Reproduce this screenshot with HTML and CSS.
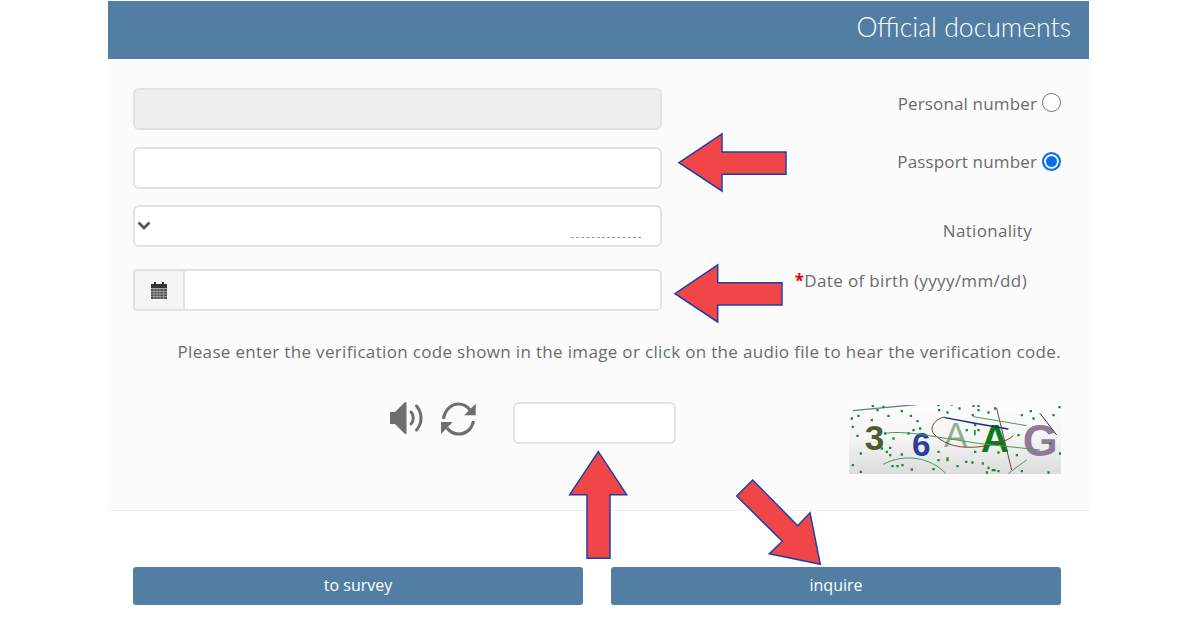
FILE: index.html
```html
<!DOCTYPE html>
<html lang="en">
<head>
<meta charset="utf-8">
<title>Official documents</title>
<link rel="stylesheet" href="styles.css">
</head>
<body>
<div class="page">
  <main class="card">
    <header class="card-head"><h1>Official documents</h1></header>
    <section class="card-body">
      <div class="row row-1">
        <input class="field field-disabled" type="text" disabled>
        <label class="side side-up"><span>Personal number</span><input class="radio" type="radio" name="idtype"></label>
      </div>
      <div class="row row-2">
        <input class="field" type="text">
        <label class="side side-up side-pass"><span>Passport number</span><input class="radio" type="radio" name="idtype" checked></label>
      </div>
      <div class="row row-3">
        <div class="field select">
          <svg class="chevron" viewBox="0 0 14 9" aria-hidden="true"><path d="M1.5 1.5 7 7l5.5-5.5"/></svg>
          <span class="dots"></span>
        </div>
        <div class="side side-nat">Nationality</div>
      </div>
      <div class="row row-4">
        <div class="date-group">
          <span class="addon">
            <svg class="calendar" viewBox="0 0 16 17" aria-hidden="true">
              <path class="cal-top" d="M0 2h3V0h2v2h6V0h2v2h3v4H0z"/>
              <path class="cal-grid" d="M0 6.500h16v10.500H0z"/>
              <path class="cal-lines" d="M3 7v10M6 7v10M9 7v10M12.500 7v10M0 9.500h16M0 12h16M0 14.500h16"/>
            </svg>
          </span>
          <input class="date-input" type="text">
        </div>
        <div class="side side-dob"><span class="req">*</span>Date of birth (yyyy/mm/dd)</div>
      </div>
      <p class="hint">Please enter the verification code shown in the image or click on the audio file to hear the verification code.</p>
      <div class="verify">
        <svg class="speaker" viewBox="0 0 35 34" aria-hidden="true">
          <path class="icon-fill" d="M1 11h5L16 1c1 0 1.500.5 1.500 1.500v29c0 1-.5 1.500-1.500 1.500L6 23H1z"/>
          <path class="icon-wave" d="M22 11c3 3 3 9 0 12M27.500 5c6 7 6 17 0 24"/>
        </svg>
        <svg class="refresh" viewBox="0 0 35 34" aria-hidden="true">
          <path class="icon-arc" d="M2.500 17C3.500 9 9.500 2 17.500 2 22 2 26 4 29 8M32.500 19C31 27 25 32 17.500 32 13 32 9 30 6 26"/>
          <path class="icon-fill" d="M34.700 1.700V13.300H23zM0 20H11.700L0 32z"/>
        </svg>
        <input class="field code" type="text">
        <svg class="captcha" viewBox="27 30 636 207" role="img" aria-label="verification code image">
          <defs><linearGradient id="cg" x1="0" y1="0" x2="0" y2="1"><stop offset="0" stop-color="#fcfcfc"/><stop offset=".5" stop-color="#f4f4f4"/><stop offset="1" stop-color="#dcdcdc"/></linearGradient></defs>
          <rect x="27" y="30" width="636" height="207" fill="url(#cg)"/>
          <text class="c-3" x="74" y="165">3</text>
          <text class="c-6" x="216" y="184">6</text>
          <text class="c-a1" x="312" y="156">A</text>
          <text class="c-a2" x="422" y="172">A</text>
          <text class="c-g" x="548" y="184">G</text>
          <path class="l-grey" d="M38 47 268 25"/>
          <path class="l-brown" d="M315 66C280 72 262 105 290 125 320 150 360 162 420 155 460 150 500 140 520 122"/>
          <path class="l-navy" d="M315 68 400 84 505 102"/>
          <path class="l-brown" d="M470 40 515 225"/>
          <path class="l-green" d="M135 115C190 105 280 125 350 135 430 150 520 155 600 165"/>
          <path class="l-green" d="M130 208C190 175 270 185 318 236"/>
          <path class="l-green" d="M505 236C525 220 545 205 560 195"/>
          <path class="l-green" d="M400 65 560 92"/>
          <path class="l-black" d="M600 55 650 120"/>
          <path class="dots-g" d="M32 67h7v7h-7zM52 59h7v7h-7zM92 72h7v7h-7zM95 29h7v7h-7zM109 42h7v7h-7zM127 32h7v7h-7zM142 59h7v7h-7zM182 45h7v7h-7zM209 59h7v7h-7zM229 75h7v7h-7zM292 27h7v7h-7zM294 42h7v7h-7zM332 25h7v7h-7zM355 37h7v7h-7zM319 49h7v7h-7zM397 29h7v7h-7zM412 29h7v7h-7zM412 42h7v7h-7zM442 49h7v7h-7zM462 37h7v7h-7zM395 57h7v7h-7zM542 57h7v7h-7zM569 45h7v7h-7zM577 67h7v7h-7zM637 57h7v7h-7zM655 33h7v7h-7zM35 92h7v7h-7zM49 119h7v7h-7zM132 112h7v7h-7zM157 127h7v7h-7zM122 157h7v7h-7zM147 155h7v7h-7zM137 167h7v7h-7zM147 177h7v7h-7zM59 172h7v7h-7zM182 175h7v7h-7zM292 167h7v7h-7zM319 187h7v12h-7zM402 167h7v7h-7zM377 102h7v7h-7zM402 105h5v16h-5zM402 87h7v7h-7zM412 102h7v7h-7zM532 117h7v7h-7zM472 169h7v7h-7zM527 177h7v7h-7zM627 142h7v7h-7zM657 172h7v7h-7zM35 207h7v7h-7zM59 227h7v7h-7zM154 210h7v7h-7zM169 210h7v7h-7zM184 207h7v7h-7zM212 220h7v7h-7zM292 192h7v7h-7zM277 219h7v7h-7zM349 210h7v7h-7zM375 197h7v7h-7zM394 199h7v7h-7zM425 202h7v7h-7zM442 215h7v7h-7zM455 222h12v7h-12zM437 229h7v7h-7zM472 225h7v7h-7zM542 225h7v7h-7zM622 229h7v7h-7zM237 97h7v7h-7zM217 102h7v7h-7zM202 112h7v7h-7z"/>
        </svg>
      </div>
    </section>
    <footer class="card-foot">
      <button class="btn btn-survey" type="button">to survey</button>
      <button class="btn btn-inquire" type="button">inquire</button>
    </footer>
  </main>
  <svg class="arrows" viewBox="0 0 1200 630" aria-hidden="true">
    <path d="M679 162.700 722 134V152H786V174.300H722V191z"/>
    <path d="M675 293.700 717.700 265V282.700H782V305H717.700V322z"/>
    <path d="M598.300 451.700 626.700 494.700H610V558.300H587V494.700H569.700z"/>
    <path d="M752.700 480 797.700 525.700 810 512.700 820.300 564.300 769.300 553.700 782.300 541.300 736.700 496z"/>
  </svg>
</div>
</body>
</html>
```
FILE: styles.css
```css
* { box-sizing: border-box; }
html, body { margin: 0; padding: 0; background: #fff; }
body { font-family: "Open Sans", "Noto Sans", "Liberation Sans", sans-serif; color: #6b6b6b; }
.page { position: relative; width: 1200px; height: 630px; overflow: hidden; padding: 1px 111px 0 108px; }
.card { display: flex; flex-direction: column; width: 981px; }
.card-head { height: 58px; background: #527ea4; display: flex; align-items: center; justify-content: flex-end; padding: 0 18px 7px 0; }
.card-head h1 { margin: 0; font-family: "Lato", sans-serif; font-weight: 300; font-size: 26.600px; color: #fff; }
.card-body { height: 452px; background: #fbfbfb; border-bottom: 1px solid #f0f0f0; padding: 29px 28px 0 25px; }
.row { display: flex; align-items: center; }
.row-1, .row-2, .row-3 { height: 42px; }
.row-2 { margin-top: 17px; }
.row-3 { margin-top: 16px; }
.row-4 { margin-top: 22px; height: 42px; }
.field { display: block; width: 529px; height: 42px; flex: none; background: #fff; border: 2px solid #e2e2e2; border-radius: 6px; outline: none; }
.field-disabled { background: #eeeeee; }
.side { flex: 1; display: flex; justify-content: flex-end; align-items: center; gap: 5px; font-size: 17px; line-height: 22px; letter-spacing: .15px; }
.side-up { margin-bottom: 11px; }
.side-pass { margin-bottom: 12px; }
.side-nat { padding: 0 29px 0 0; margin-top: 9px; letter-spacing: .3px; }
.side-dob { padding: 0 34px 0 0; margin-top: -18px; gap: 0; letter-spacing: .35px; }
.req { color: #e8000c; font-weight: 700; }
.radio { appearance: none; margin: 0 0 2px; width: 19px; height: 19px; border: 1.500px solid #777; border-radius: 50%; background: #fff; }
.radio:checked { border: 2px solid #0d6fe6; box-shadow: inset 0 0 0 2px #fff; background: #0d6fe6; }
.select { position: relative; display: flex; align-items: center; justify-content: space-between; padding: 0 19px 0 1.500px; }
.chevron { width: 14px; height: 9px; margin-top: -1px; fill: none; stroke: #555; stroke-width: 2.800; }
.dots { width: 70px; height: 0; border-top: 1px dashed #999; align-self: flex-end; margin-bottom: 7px; }
.date-group { display: flex; width: 529px; height: 42px; border: 2px solid #e2e2e2; border-radius: 4px 6px 6px 4px; background: #fff; flex: none; overflow: hidden; }
.addon { width: 50px; flex: none; display: flex; align-items: center; justify-content: center; background: #f5f5f5; border-right: 2px solid #e2e2e2; }
.calendar { width: 16px; height: 17px; }
.cal-top { fill: #333; }
.cal-grid { fill: #555; }
.cal-lines { fill: none; stroke: #aaa; stroke-width: .7; }
.date-input { flex: 1; min-width: 0; border: 0; outline: none; background: #fff; }
.hint { margin: 29px 0 0; height: 24px; font-size: 17px; line-height: 24px; text-align: right; letter-spacing: .33px; white-space: nowrap; }
.verify { display: flex; align-items: flex-start; margin-top: 38px; padding-left: 256px; }
.speaker { width: 35px; height: 34px; flex: none; margin-top: -1px; }
.refresh { width: 35px; height: 34px; flex: none; margin: 0 0 0 17px; }
.icon-fill { fill: #6e6e6e; }
.icon-wave { fill: none; stroke: #6e6e6e; stroke-width: 3; stroke-linecap: round; }
.icon-arc { fill: none; stroke: #6e6e6e; stroke-width: 3.200; }
.code { width: 163px; margin-left: 37px; }
.captcha { width: 212px; height: 69px; flex: none; margin: 3px 0 0 auto; }
.captcha text { font-family: "Liberation Sans", sans-serif; font-weight: 700; }
.c-3 { font-size: 105px; fill: #4e5c2c; }
.c-6 { font-size: 100px; fill: #2b3f9e; }
.c-a1 { font-size: 105px; fill: #8fae90; font-weight: 400 !important; }
.c-a2 { font-size: 118px; fill: #0a7d1a; }
.c-g { font-size: 135px; fill: #94789a; }
.captcha path { fill: none; stroke-width: 3; }
.l-grey { stroke: #5f7f80; stroke-width: 4 !important; }
.l-brown { stroke: #75442c; }
.l-navy { stroke: #1c2a8c; stroke-width: 4 !important; }
.l-green { stroke: #4b9a55; }
.l-black { stroke: #333; }
.captcha .dots-g { fill: #1f8a33; stroke: none; }
.card-foot { display: flex; gap: 28px; padding: 56px 28px 0 25px; }
.btn { width: 450px; height: 38px; border: 0; border-radius: 3px; background: #527ea4; color: #fff; font-family: inherit; font-size: 16px; padding: 0 0 3px; }
.arrows { position: absolute; left: 0; top: 0; width: 1200px; height: 630px; pointer-events: none; }
.arrows path { fill: #f14648; stroke: #1f3fa8; stroke-width: 1.500; }
```
